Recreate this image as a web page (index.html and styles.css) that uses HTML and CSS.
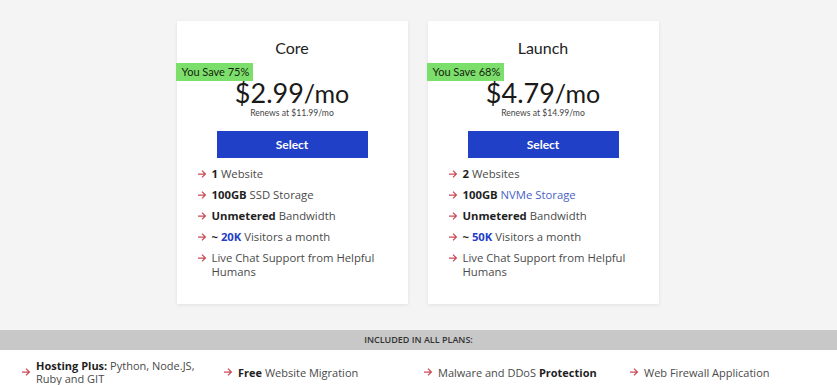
FILE: index.html
```html
<!DOCTYPE html>
<html lang="en">
<head>
    <meta charset="UTF-8">
    <meta name="viewport" content="width=device-width, initial-scale=1.0">
    <title>Hosting Plans</title>
    <link rel="stylesheet" href="styles.css">
</head>
<body>
    <div class="plans">
        <div class="plan">
            <h2 class="plan-name">Core</h2>
            <span class="save-badge">You Save 75%</span>
            <div class="price">$2.99<span class="per">/mo</span></div>
            <div class="renews">Renews at $11.99/mo</div>
            <a href="#" class="select-btn">Select</a>
            <ul class="features">
                <li><svg class="arrow" viewBox="0 0 10 10"><path d="M1 5h7.5M5 1.6L8.4 5 5 8.4"/></svg><span><b>1</b> Website</span></li>
                <li><svg class="arrow" viewBox="0 0 10 10"><path d="M1 5h7.5M5 1.6L8.4 5 5 8.4"/></svg><span><b>100GB</b> SSD Storage</span></li>
                <li><svg class="arrow" viewBox="0 0 10 10"><path d="M1 5h7.5M5 1.6L8.4 5 5 8.4"/></svg><span><b>Unmetered</b> Bandwidth</span></li>
                <li><svg class="arrow" viewBox="0 0 10 10"><path d="M1 5h7.5M5 1.6L8.4 5 5 8.4"/></svg><span><b>~ <em>20K</em></b> Visitors a month</span></li>
                <li><svg class="arrow" viewBox="0 0 10 10"><path d="M1 5h7.5M5 1.6L8.4 5 5 8.4"/></svg><span>Live Chat Support from Helpful Humans</span></li>
            </ul>
        </div>
        <div class="plan">
            <h2 class="plan-name">Launch</h2>
            <span class="save-badge">You Save 68%</span>
            <div class="price">$4.79<span class="per">/mo</span></div>
            <div class="renews">Renews at $14.99/mo</div>
            <a href="#" class="select-btn">Select</a>
            <ul class="features">
                <li><svg class="arrow" viewBox="0 0 10 10"><path d="M1 5h7.5M5 1.6L8.4 5 5 8.4"/></svg><span><b>2</b> Websites</span></li>
                <li><svg class="arrow" viewBox="0 0 10 10"><path d="M1 5h7.5M5 1.6L8.4 5 5 8.4"/></svg><span><b>100GB</b> <a href="#" class="link">NVMe Storage</a></span></li>
                <li><svg class="arrow" viewBox="0 0 10 10"><path d="M1 5h7.5M5 1.6L8.4 5 5 8.4"/></svg><span><b>Unmetered</b> Bandwidth</span></li>
                <li><svg class="arrow" viewBox="0 0 10 10"><path d="M1 5h7.5M5 1.6L8.4 5 5 8.4"/></svg><span><b>~ <em>50K</em></b> Visitors a month</span></li>
                <li><svg class="arrow" viewBox="0 0 10 10"><path d="M1 5h7.5M5 1.6L8.4 5 5 8.4"/></svg><span>Live Chat Support from Helpful Humans</span></li>
            </ul>
        </div>
    </div>
    <div class="included">
        <div class="included-title">INCLUDED IN ALL PLANS:</div>
        <ul class="included-list">
            <li><svg class="arrow" viewBox="0 0 10 10"><path d="M1 5h7.5M5 1.6L8.4 5 5 8.4"/></svg><span><b>Hosting Plus:</b> Python, Node.JS, Ruby and GIT</span></li>
            <li><svg class="arrow" viewBox="0 0 10 10"><path d="M1 5h7.5M5 1.6L8.4 5 5 8.4"/></svg><span><b>Free</b> Website Migration</span></li>
            <li><svg class="arrow" viewBox="0 0 10 10"><path d="M1 5h7.5M5 1.6L8.4 5 5 8.4"/></svg><span>Malware and DDoS <b>Protection</b></span></li>
            <li><svg class="arrow" viewBox="0 0 10 10"><path d="M1 5h7.5M5 1.6L8.4 5 5 8.4"/></svg><span>Web Firewall Application</span></li>
        </ul>
    </div>
</body>
</html>
```

FILE: styles.css
```css
html, body {
    margin: 0;
    background: #f4f4f4;
    font-family: 'Open Sans', sans-serif;
    color: #444;
    overflow: hidden;
}
.plans {
    display: flex;
    justify-content: center;
    gap: 20px;
    padding: 21px 2px 26px 0;
}
.plan {
    position: relative;
    width: 231px;
    height: 283px;
    box-sizing: border-box;
    background: #fff;
    box-shadow: 0 1px 4px rgba(0, 0, 0, 0.08);
    display: flex;
    flex-direction: column;
    align-items: center;
    padding-top: 17px;
}
.plan-name {
    margin: 0;
    font-family: 'Lato', sans-serif;
    font-weight: 400;
    font-size: 16px;
    line-height: 20px;
    color: #222;
}
.save-badge {
    position: absolute; /* sits over the card edge */
    left: -1px;
    top: 42px;
    height: 18px;
    line-height: 18px;
    padding: 0 4px 0 6px;
    background: #7ddf6b;
    color: #16240f;
    font-family: 'Lato', sans-serif;
    font-size: 11px;
}
.price {
    margin-top: 20px;
    font-family: 'Lato', sans-serif;
    font-size: 27px;
    line-height: 30px;
    color: #1a1a1a;
}
.price .per {
    font-size: 25px;
}
.renews {
    font-family: 'Lato', sans-serif;
    font-size: 8.6px;
    line-height: 10px;
    color: #444;
}
.select-btn {
    display: block;
    margin-top: 13px;
    width: 151px;
    height: 27px;
    line-height: 27px;
    text-align: center;
    background: #1f40c7;
    color: #fff;
    font-family: 'Lato', sans-serif;
    font-weight: 700;
    font-size: 12px;
    text-decoration: none;
}
.features {
    list-style: none;
    margin: 9px 0 0;
    padding: 0 16px 0 20px;
    align-self: stretch;
    font-size: 11.3px;
    color: #4a4a4a;
}
.features li {
    display: flex;
    align-items: flex-start;
    gap: 5px;
    line-height: 14px;
    margin-bottom: 7px;
}
.arrow {
    flex: none;
    width: 10px;
    height: 10px;
    margin-top: 2px;
    fill: none;
    stroke: #cc4a58;
    stroke-width: 1.25;
}
b {
    font-weight: 700;
    color: #1f1f1f;
}
em {
    font-style: normal;
    color: #1f40c7;
}
.link {
    color: #4a5fc4;
    text-decoration: none;
}
.included {
    background: #fff;
    height: 55px;
}
.included-title {
    background: #c8c8c8;
    height: 20px;
    line-height: 20px;
    text-align: center;
    font-size: 9px;
    font-weight: 600;
    color: #333;
}
.included-list {
    list-style: none;
    margin: 0;
    padding: 9px 0 0 21px;
    display: grid;
    grid-template-columns: 202px 200px 206px 1fr;
    font-size: 11px;
    color: #4a4a4a;
}
.included-list li {
    display: flex;
    align-items: center;
    gap: 5px;
    line-height: 13px;
    padding-right: 20px;
}
.included-list .arrow {
    margin-top: 0;
}
```
